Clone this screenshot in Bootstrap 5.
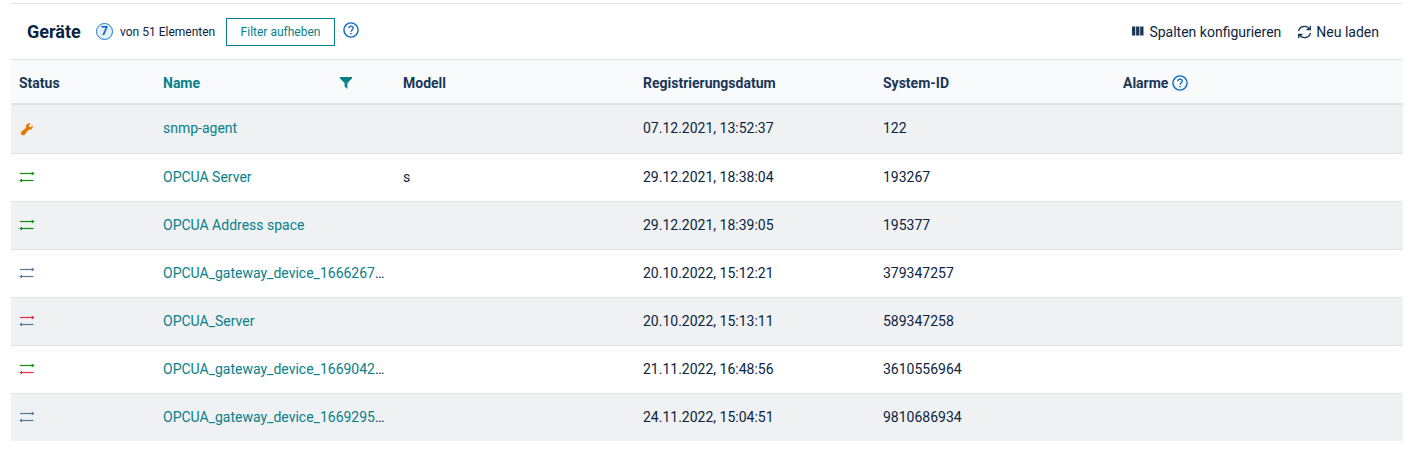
<!DOCTYPE html>
<html lang="de">
<head>
<meta charset="utf-8">
<title>Geräte</title>
<link href="https://cdn.jsdelivr.net/npm/bootstrap@5.3.0/dist/css/bootstrap.min.css" rel="stylesheet">
<style>
body{font:400 14px/24px Roboto,sans-serif;color:#0b2442;background:#fff;overflow:hidden}
.panel{width:1392px;margin:3px 0 0 11px;border-top:1px solid #e1e3e8}
.toolbar{height:56px;border-bottom:1px solid #e1e3e8;padding:0 24px 0 16px}
.title{font-size:18px;font-weight:700;width:69px;margin:0}
.count{width:17px;height:17px;border:1px solid #1776d2;background:#e3f0fd;color:#0b5fc4;font-size:12px;font-weight:700;line-height:15px}
.total{font-size:12px;margin-left:7px;width:106px;white-space:nowrap}
.btn-filter{--bs-btn-color:#07808a;--bs-btn-border-color:#07808a;--bs-btn-font-size:12px;--bs-btn-padding-x:0;--bs-btn-padding-y:0;--bs-btn-border-radius:0;width:109px;height:28px;line-height:26px}
svg{display:block;flex:none}
.help{color:#0b67c4}
.bars{margin:0 5px 2px 0}
.grid{table-layout:fixed;margin:0;--bs-table-color:#0b2442;--bs-table-bg:transparent;--bs-table-striped-bg:#f0f1f3;--bs-table-striped-color:#0b2442;color:#0b2442;border-collapse:separate;border-spacing:0}
.grid>thead>tr>th{height:45px;padding:2px 8px 0;background:#f9fafc;color:#1a3655;border-bottom:2px solid #e1e3e8;font-weight:700;vertical-align:middle}
.grid>tbody>tr>td{height:48px;padding:0 8px 2px;border-bottom:1px solid #e1e3e8;vertical-align:middle;white-space:nowrap}
.grid>tbody>tr:first-child>td{height:49px}
.grid>tbody>tr:last-child>td{height:47px;border-bottom:0}
.grid a{color:#07808a;text-decoration:none}
.grid .sorted{color:#07808a!important}
.filter{margin-right:35px}
.up-ok{color:#0a8f0a}.up-off{color:#54789b}.up-err{color:#dc2e45}
.maint{color:#e67700;margin-top:2px}
</style>
</head>
<body>
<svg width="0" height="0" class="position-absolute">
<symbol id="q" viewBox="0 0 16 16"><circle cx="8" cy="8" r="7.1" fill="none" stroke="currentColor" stroke-width="1.4"/><path d="M5.7 6.3C5.7 4.9 6.7 4.1 8 4.1s2.3.8 2.3 2c0 1.6-2.2 1.7-2.2 3.6" fill="none" stroke="currentColor" stroke-width="1.3"/><path d="M7.3 10.9h1.5v1.4H7.3z" fill="currentColor"/></symbol>
<symbol id="r" viewBox="0 0 16 12"><path d="M1 2.5H14" stroke="currentColor" stroke-width="1.2"/><path d="M12.8.4 15.5 2.5l-2.7 2.1z" fill="currentColor"/></symbol>
<symbol id="l" viewBox="0 0 16 12"><path d="M14.5 9.5H2" stroke="currentColor" stroke-width="1.2"/><path d="M3 7.4.3 9.5 3 11.6z" fill="currentColor"/></symbol>
</svg>
<main class="panel">
<header class="toolbar d-flex align-items-center">
<h1 class="title">Geräte</h1>
<span class="count rounded-circle text-center">7</span>
<span class="total">von 51 Elementen</span>
<button class="btn btn-filter">Filter aufheben</button>
<svg class="help ms-2 mb-1" width="16" height="16"><use href="#q"/></svg>
<div class="d-flex align-items-center ms-auto">
<svg class="bars" width="12" height="10" viewBox="0 0 12 10" fill="#1a3655"><path d="M0 .5h3.3v9H0zM4.1.5h3.3v9H4.1zM8.2.5h3.3v9H8.2z"/></svg>
<span>Spalten konfigurieren</span>
<svg class="ms-3 me-1" width="15" height="14" viewBox="0 0 15 14" fill="none" stroke="#1a3655" stroke-width="1.3"><path d="M1.6 6.2a5.9 5.6 0 0 1 10.9-2.1M13.3.8v3.7H9.5M13.4 7.8a5.9 5.6 0 0 1-10.9 2.1M1.7 13.2V9.5h3.8"/></svg>
<span>Neu laden</span>
</div>
</header>
<table class="table table-striped grid">
<colgroup><col style="width:144px"><col style="width:240px"><col style="width:240px"><col style="width:240px"><col style="width:240px"><col></colgroup>
<thead><tr><th>Status</th><th class="sorted"><div class="d-flex align-items-center justify-content-between">Name<svg class="filter" width="12" height="12" viewBox="0 0 12 12" fill="currentColor"><path d="M0 0h12v1.4L7.4 6v6L4.6 9.6V6L0 1.4z"/></svg></div></th><th>Modell</th><th>Registrierungsdatum</th><th>System-ID</th><th><div class="d-flex align-items-center">Alarme<svg class="help ms-1" width="16" height="16"><use href="#q"/></svg></div></th></tr></thead>
<tbody>
<tr><td><svg class="maint" width="16" height="14" viewBox="0 0 16 14"><path fill="currentColor" d="M2.2 9.8 6.9 6C6.3 3.4 8.2 1.1 11 1.3l.7.2-1.9 2 .3 1.5 1.6.2 1.9-1.9c.8 2.6-1.2 5-4.2 4.7L5.8 12.5c-.9 1.1-2.2 1.1-3.1.3-1-.9-1.2-2-.5-3z"/></svg></td><td><a href="#">snmp-agent</a></td><td></td><td>07.12.2021, 13:52:37</td><td>122</td><td></td></tr>
<tr><td><svg width="16" height="12"><use href="#r" class="up-ok"/><use href="#l" class="up-ok"/></svg></td><td><a href="#">OPCUA Server</a></td><td>s</td><td>29.12.2021, 18:38:04</td><td>193267</td><td></td></tr>
<tr><td><svg width="16" height="12"><use href="#r" class="up-ok"/><use href="#l" class="up-ok"/></svg></td><td><a href="#">OPCUA Address space</a></td><td></td><td>29.12.2021, 18:39:05</td><td>195377</td><td></td></tr>
<tr><td><svg width="16" height="12"><use href="#r" class="up-off"/><use href="#l" class="up-off"/></svg></td><td><a href="#">OPCUA_gateway_device_1666267</a>…</td><td></td><td>20.10.2022, 15:12:21</td><td>379347257</td><td></td></tr>
<tr><td><svg width="16" height="12"><use href="#r" class="up-err"/><use href="#l" class="up-off"/></svg></td><td><a href="#">OPCUA_Server</a></td><td></td><td>20.10.2022, 15:13:11</td><td>589347258</td><td></td></tr>
<tr><td><svg width="16" height="12"><use href="#r" class="up-ok"/><use href="#l" class="up-err"/></svg></td><td><a href="#">OPCUA_gateway_device_1669042</a>…</td><td></td><td>21.11.2022, 16:48:56</td><td>3610556964</td><td></td></tr>
<tr><td><svg width="16" height="12"><use href="#r" class="up-off"/><use href="#l" class="up-off"/></svg></td><td><a href="#">OPCUA_gateway_device_1669295</a>…</td><td></td><td>24.11.2022, 15:04:51</td><td>9810686934</td><td></td></tr>
</tbody>
</table>
</main>
<script src="https://cdn.jsdelivr.net/npm/bootstrap@5.3.0/dist/js/bootstrap.bundle.min.js"></script>
</body>
</html>
